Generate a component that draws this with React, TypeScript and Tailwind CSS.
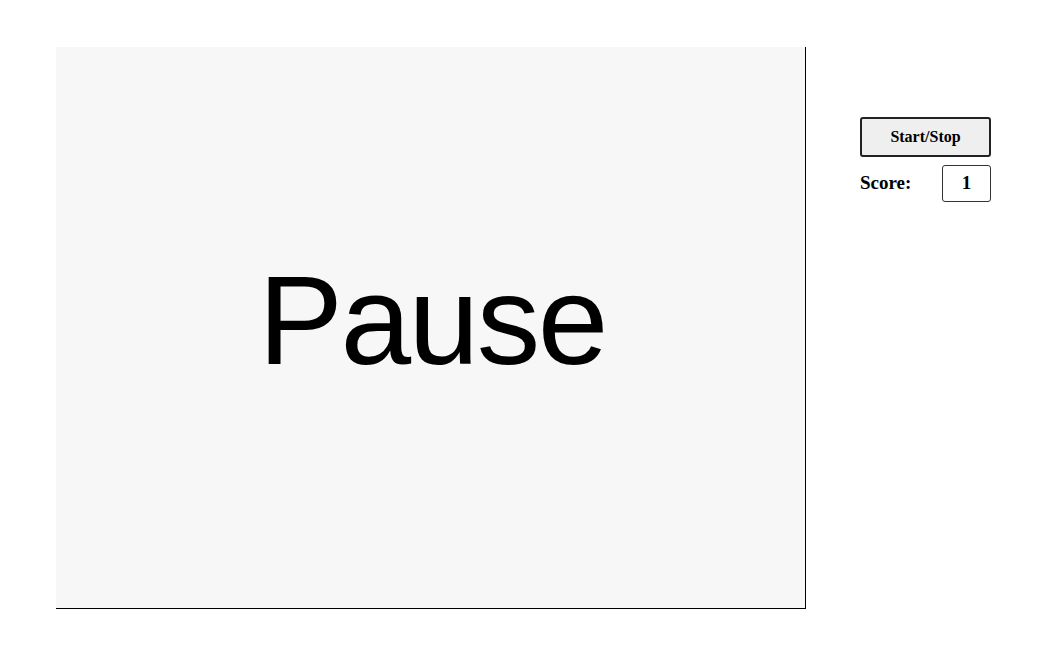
export default function App() {
  return (
    <div className="min-h-screen bg-white flex items-start pl-[56px] pt-[47px] gap-[54px]">
      <div className="w-[750px] h-[562px] bg-[#f7f7f7] border-r-[1.5px] border-b-[1.5px] border-black flex items-center justify-center pb-[14px]">
        <span className="text-[127px] leading-none tracking-[-2.5px] pl-[3px] text-black font-['Liberation_Sans',Arial,sans-serif]">
          Pause
        </span>
      </div>
      <div className="pt-[70px] flex flex-col gap-[8px] w-[131px] font-['Liberation_Serif','Times_New_Roman',serif]">
        <button
          type="button"
          className="h-[40px] w-full bg-[#efefef] border-2 border-[#222] rounded-[3px] text-[16px] font-bold text-black"
        >
          Start/Stop
        </button>
        <div className="flex items-center justify-between">
          <span className="text-[19px] font-bold text-black">Score:</span>
          <div className="w-[49px] h-[37px] border border-[#333] rounded-[3px] bg-white flex items-center justify-center text-[19px] font-bold text-black">
            1
          </div>
        </div>
      </div>
    </div>
  );
}
